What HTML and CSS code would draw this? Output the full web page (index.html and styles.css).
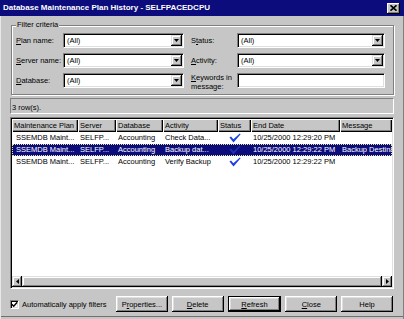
FILE: index.html
```html
<!DOCTYPE html>
<html>
<head>
<meta charset="utf-8">
<title>Database Maintenance Plan History</title>
<link rel="stylesheet" href="styles.css">
</head>
<body>
<div class="window">
  <div class="titlebar">
    <span class="title">Database Maintenance Plan History - SELFPACEDCPU</span>
    <span class="close-btn"><svg width="7" height="6" viewBox="0 0 7 6"><path d="M0.5 0.3 L6.5 5.7 M6.5 0.3 L0.5 5.7" stroke="#000" stroke-width="1.6" fill="none"/></svg></span>
  </div>
  <div class="content">
    <fieldset class="group">
      <legend>Filter criteria</legend>
      <div class="filters">
        <label><span><u>P</u>lan name:</span></label>
        <div class="combo"><span class="val">(All)</span><span class="drop"><svg width="5" height="3" viewBox="0 0 5 3"><polygon points="0,0 5,0 2.5,3" fill="#000"/></svg></span></div>
        <label class="r"><span>S<u>t</u>atus:</span></label>
        <div class="combo"><span class="val">(All)</span><span class="drop"><svg width="5" height="3" viewBox="0 0 5 3"><polygon points="0,0 5,0 2.5,3" fill="#000"/></svg></span></div>

        <label><span><u>S</u>erver name:</span></label>
        <div class="combo"><span class="val">(All)</span><span class="drop"><svg width="5" height="3" viewBox="0 0 5 3"><polygon points="0,0 5,0 2.5,3" fill="#000"/></svg></span></div>
        <label class="r"><span><u>A</u>ctivity:</span></label>
        <div class="combo"><span class="val">(All)</span><span class="drop"><svg width="5" height="3" viewBox="0 0 5 3"><polygon points="0,0 5,0 2.5,3" fill="#000"/></svg></span></div>

        <label><span><u>D</u>atabase:</span></label>
        <div class="combo"><span class="val">(All)</span><span class="drop"><svg width="5" height="3" viewBox="0 0 5 3"><polygon points="0,0 5,0 2.5,3" fill="#000"/></svg></span></div>
        <label class="r two"><span><u>K</u>eywords in<br>message:</span></label>
        <div class="textbox"></div>
      </div>
    </fieldset>

    <div class="rowcount">3 row(s).</div>

    <div class="list">
      <div class="cols header">
        <div>Maintenance Plan</div>
        <div>Server</div>
        <div>Database</div>
        <div>Activity</div>
        <div>Status</div>
        <div>End Date</div>
        <div>Message</div>
      </div>
      <div class="cols row">
        <div>SSEMDB Maint...</div>
        <div>SELFP...</div>
        <div>Accounting</div>
        <div>Check Data...</div>
        <div class="st"><svg width="12" height="10" viewBox="0 0 12 10"><path d="M0.5 4.6 L2 3.6 L4.4 6.2 L10.8 0.4 L11.6 1.3 L4.5 9.4 Z" fill="#1a3ee6"/></svg></div>
        <div>10/25/2000 12:29:20 PM</div>
        <div></div>
      </div>
      <div class="cols row sel">
        <div>SSEMDB Maint...</div>
        <div>SELFP...</div>
        <div>Accounting</div>
        <div>Backup dat...</div>
        <div class="st"><svg width="12" height="10" viewBox="0 0 12 10"><path d="M0.5 4.6 L2 3.6 L4.4 6.2 L10.8 0.4 L11.6 1.3 L4.5 9.4 Z" fill="#1d2fb0"/></svg></div>
        <div>10/25/2000 12:29:22 PM</div>
        <div>Backup Destination...</div>
      </div>
      <div class="cols row">
        <div>SSEMDB Maint...</div>
        <div>SELFP...</div>
        <div>Accounting</div>
        <div>Verify Backup</div>
        <div class="st"><svg width="12" height="10" viewBox="0 0 12 10"><path d="M0.5 4.6 L2 3.6 L4.4 6.2 L10.8 0.4 L11.6 1.3 L4.5 9.4 Z" fill="#1a3ee6"/></svg></div>
        <div>10/25/2000 12:29:22 PM</div>
        <div></div>
      </div>
      <div class="fill"></div>
      <div class="hscroll">
        <span class="arr"><svg width="3" height="5" viewBox="0 0 3 5"><polygon points="3,0 3,5 0,2.5" fill="#000"/></svg></span>
        <span class="thumb"></span>
        <span class="arr"><svg width="3" height="5" viewBox="0 0 3 5"><polygon points="0,0 0,5 3,2.5" fill="#000"/></svg></span>
      </div>
    </div>

    <div class="footer">
      <div class="auto">
        <span class="cb"><svg width="7" height="7" viewBox="0 0 7 7"><path d="M0.8 3.2 L2.7 5.2 L6.2 1.2" stroke="#000" stroke-width="1.4" fill="none"/></svg></span>
        <span>Automatically apply filters</span>
      </div>
      <div class="buttons">
        <span class="btn">P<u>r</u>operties...</span>
        <span class="btn"><u>D</u>elete</span>
        <span class="btn default"><u>R</u>efresh</span>
        <span class="btn"><u>C</u>lose</span>
        <span class="btn">Help</span>
      </div>
    </div>
  </div>
</div>
</body>
</html>
```

FILE: styles.css
```css
* { box-sizing: border-box; }
html, body { margin: 0; padding: 0; }
body {
  width: 404px;
  height: 319px;
  overflow: hidden;
  background: #c6c6c6;
  font-family: "Liberation Sans", Arial, sans-serif;
  font-size: 7.5px;
  color: #000;
}
u { text-decoration: underline; text-underline-offset: 1px; }

.window {
  width: 404px;
  height: 319px;
  display: flex;
  flex-direction: column;
  box-shadow: inset 1px 0 0 #e8e8e8, inset -1px 0 0 #808080, inset 0 -2px 0 #c6c6c6, inset 0 -3px 0 #707070;
}

.titlebar {
  height: 16px;
  flex: none;
  background: #0c0c7c;
  color: #fff;
  display: flex;
  align-items: center;
  justify-content: space-between;
  padding: 0 4px 0 3px;
}
.title { font-weight: bold; font-size: 8px; line-height: 10px; white-space: nowrap; }
.close-btn {
  width: 13px;
  height: 11px;
  background: #c6c6c6;
  box-shadow: inset -1px -1px 0 #000, inset 1px 1px 0 #fff, inset -2px -2px 0 #808080;
  display: flex;
  align-items: center;
  justify-content: center;
  padding-bottom: 1px;
}

.content {
  flex: 1;
  display: flex;
  flex-direction: column;
  padding: 0 10px;
}

.group {
  margin: 4px 0 0 1px;
  padding: 3px 8px 6px 4px;
  border: 1px solid #808080;
  box-shadow: 1px 1px 0 #fff, inset 1px 1px 0 #fff;
  min-width: 0;
}
.group legend {
  padding: 0 1px;
  line-height: 10px;
  background: #c6c6c6;
}

.filters {
  display: grid;
  grid-template-columns: 47px 121px 53px 148px;
  grid-template-rows: 15px 15px 15px;
  row-gap: 5px;
}
.filters label { display: flex; align-items: center; white-space: nowrap; }
.filters label.r { padding-left: 7px; }
.filters label.two { align-items: flex-start; line-height: 9px; }

.combo, .textbox {
  background: #fff;
  border: 1px solid;
  border-color: #808080 #fff #fff #808080;
  box-shadow: inset 1px 1px 0 #000, inset -1px -1px 0 #dfdfdf;
  display: flex;
  align-items: stretch;
}
.combo .val { flex: 1; padding-left: 3px; display: flex; align-items: center; }
.combo .drop {
  width: 11px;
  margin: 1px;
  background: #c6c6c6;
  box-shadow: inset -1px -1px 0 #000, inset 1px 1px 0 #dfdfdf, inset -2px -2px 0 #808080, inset 2px 2px 0 #fff;
  display: flex;
  align-items: center;
  justify-content: center;
}

.rowcount {
  margin-top: 3px;
  height: 16px;
  flex: none;
  border: 1px solid;
  border-color: #808080 #fff #fff #808080;
  padding: 4px 0 0 1px;
  line-height: 10px;
}

.list {
  margin-top: 3px;
  height: 172px;
  flex: none;
  display: flex;
  flex-direction: column;
  background: #fff;
  border: 1px solid;
  border-color: #808080 #fff #fff #808080;
  box-shadow: inset 1px 1px 0 #000, inset -1px -1px 0 #dfdfdf;
  padding: 1px;
  overflow: hidden;
}
.cols {
  display: grid;
  grid-template-columns: 66px 38px 47px 55px 33px 89px 1fr;
}
.header { height: 13px; flex: none; }
.header > div {
  background: #c6c6c6;
  box-shadow: inset 1px 1px 0 #fff, inset -1px -1px 0 #000, inset -2px -2px 0 #808080;
  padding-left: 2px;
  line-height: 13px;
  white-space: nowrap;
  overflow: hidden;
}
.row { height: 12px; flex: none; }
.row > div { padding-left: 2px; line-height: 12px; white-space: nowrap; overflow: hidden; }
.row > div:first-child { padding-left: 4px; }
.row .st { display: flex; align-items: center; justify-content: center; padding: 0 0 0 1px; }
.row.sel {
  background: #0c0c7c;
  color: #fff;
  outline: 1px dotted #e8e890;
  outline-offset: -1px;
}
.fill { flex: 1; }

.hscroll {
  height: 11px;
  flex: none;
  display: flex;
  background: #dcdcdc;
}
.hscroll .arr, .hscroll .thumb {
  background: #c6c6c6;
  box-shadow: inset -1px -1px 0 #000, inset 1px 1px 0 #dfdfdf, inset -2px -2px 0 #808080, inset 2px 2px 0 #fff;
}
.hscroll .arr { width: 10px; display: flex; align-items: center; justify-content: center; }
.hscroll .thumb { flex: 1; }

.footer {
  margin-top: 7px;
  height: 16px;
  flex: none;
  display: flex;
  align-items: center;
}
.auto { flex: 1; display: flex; align-items: center; gap: 3px; white-space: nowrap; }
.cb {
  width: 9px;
  height: 9px;
  background: #fff;
  border: 1px solid;
  border-color: #808080 #fff #fff #808080;
  box-shadow: inset 1px 1px 0 #000, inset -1px -1px 0 #dfdfdf;
  display: flex;
  align-items: center;
  justify-content: center;
}
.buttons { display: flex; gap: 4px; width: 277px; margin-right: 1px; height: 16px; }
.btn {
  flex: 1;
  background: #c6c6c6;
  box-shadow: inset -1px -1px 0 #000, inset 1px 1px 0 #fff, inset -2px -2px 0 #808080, inset 2px 2px 0 #dfdfdf;
  display: flex;
  align-items: center;
  justify-content: center;
  white-space: nowrap;
}
.btn.default {
  border: 1px solid #000;
}
```
